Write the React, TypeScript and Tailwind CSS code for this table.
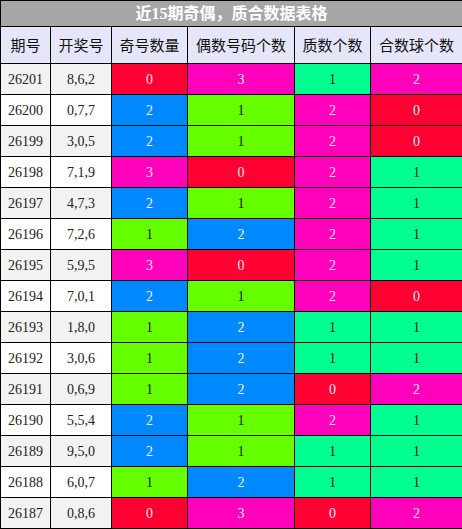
const rows: [string, string, number, number, number, number][] = [
  ['26201', '8,6,2', 0, 3, 1, 2],
  ['26200', '0,7,7', 2, 1, 2, 0],
  ['26199', '3,0,5', 2, 1, 2, 0],
  ['26198', '7,1,9', 3, 0, 2, 1],
  ['26197', '4,7,3', 2, 1, 2, 1],
  ['26196', '7,2,6', 1, 2, 2, 1],
  ['26195', '5,9,5', 3, 0, 2, 1],
  ['26194', '7,0,1', 2, 1, 2, 0],
  ['26193', '1,8,0', 1, 2, 1, 1],
  ['26192', '3,0,6', 1, 2, 1, 1],
  ['26191', '0,6,9', 1, 2, 0, 2],
  ['26190', '5,5,4', 2, 1, 2, 1],
  ['26189', '9,5,0', 2, 1, 1, 1],
  ['26188', '6,0,7', 1, 2, 1, 1],
  ['26187', '0,8,6', 0, 3, 0, 2],
];

// 奇偶 counts: 0..3
const oddEvenColor = [
  'bg-[#ff0033] text-[#ffe6f0]',
  'bg-[#66ff00] text-[#1a1a1a]',
  'bg-[#0088ff] text-[#eaf4ff]',
  'bg-[#ff00bb] text-[#ffe6f6]',
];
// 质合 counts: 0..2
const primeColor = [
  'bg-[#ff0033] text-[#ffe6f0]',
  'bg-[#00ff90] text-[#1a1a1a]',
  'bg-[#ff00bb] text-[#ffe6f6]',
];

const headers = ['期号', '开奖号', '奇号数量', '偶数号码个数', '质数个数', '合数球个数'];

export default function App() {
  return (
    <div className="w-[462px] bg-white">
      <table
        className="w-[462px] table-fixed border-collapse border border-black text-center"
        style={{ fontFamily: '"Liberation Serif", "Noto Sans CJK SC", serif' }}
      >
        <colgroup>
          <col className="w-[50px]" />
          <col className="w-[61px]" />
          <col className="w-[76px]" />
          <col className="w-[107px]" />
          <col className="w-[76px]" />
          <col className="w-[92px]" />
        </colgroup>
        <thead>
          <tr className="h-[26px]">
            <th
              colSpan={6}
              className="border border-black bg-[#a6a6a6] p-0 text-[16px] font-bold leading-none text-white"
            >
              近15期奇偶，质合数据表格
            </th>
          </tr>
          <tr className="h-[37px]">
            {headers.map(h => (
              <th
                key={h}
                className="border border-black bg-[#e6e6fa] p-0 text-[15px] font-normal text-[#111]"
                style={{ fontFamily: '"Noto Sans CJK SC", sans-serif' }}
              >
                {h}
              </th>
            ))}
          </tr>
        </thead>
        <tbody className="text-[14px]">
          {rows.map((r, i) => (
            <tr key={r[0]} className="h-[31px]">
              <td className={`border border-black p-0 text-[#222] ${i % 2 === 0 ? 'bg-[#f2f2f2]' : 'bg-white'}`}>{r[0]}</td>
              <td className={`border border-black p-0 text-[#222] ${i % 2 === 0 ? 'bg-[#f2f2f2]' : 'bg-white'}`}>{r[1]}</td>
              <td className={`border border-black p-0 ${oddEvenColor[r[2]]}`}>{r[2]}</td>
              <td className={`border border-black p-0 ${oddEvenColor[r[3]]}`}>{r[3]}</td>
              <td className={`border border-black p-0 ${primeColor[r[4]]}`}>{r[4]}</td>
              <td className={`border border-black p-0 ${primeColor[r[5]]}`}>{r[5]}</td>
            </tr>
          ))}
        </tbody>
      </table>
    </div>
  );
}
